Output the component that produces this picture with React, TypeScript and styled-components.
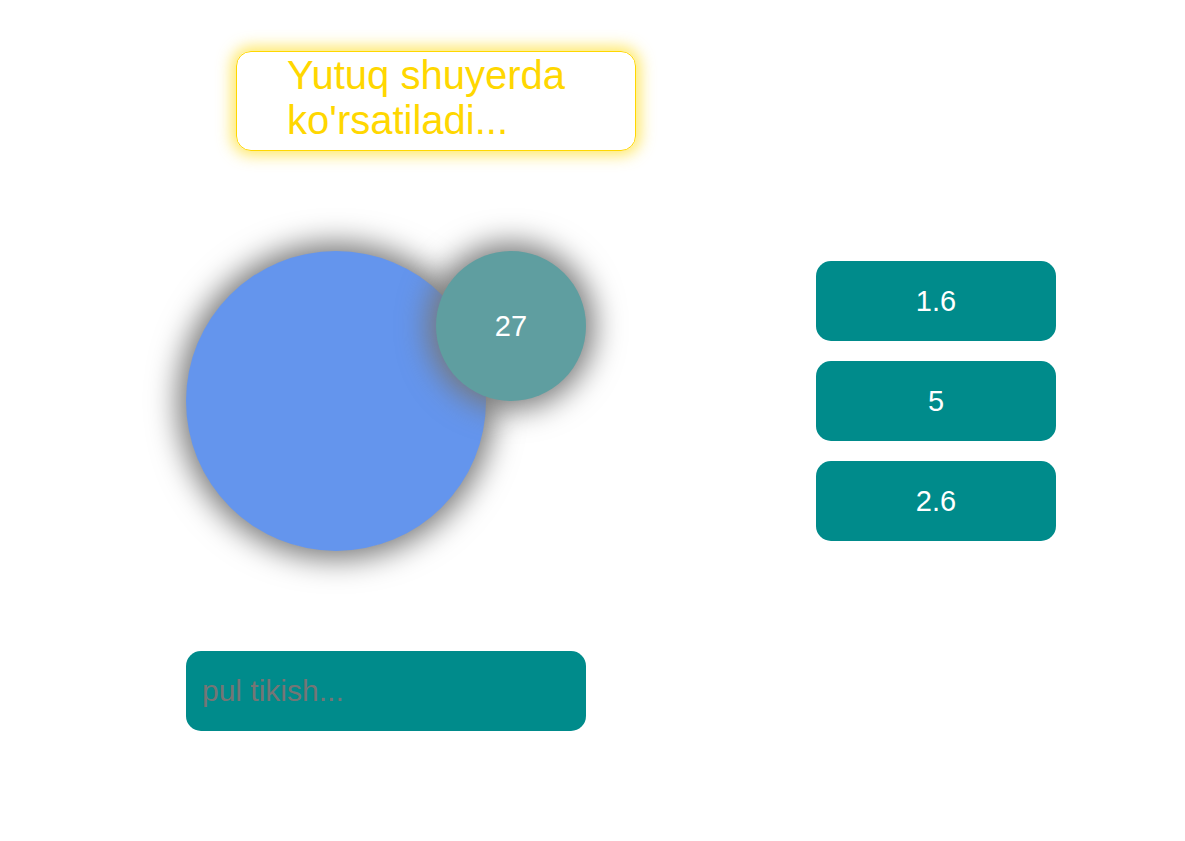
import React from "react";
import styled, { createGlobalStyle } from "styled-components";

const Global = createGlobalStyle`
  html, body { margin: 0; padding: 0; background: #ffffff; }
  body { font-family: "Liberation Sans", Arial, sans-serif; }
  * { box-sizing: border-box; }
`;

const Page = styled.div`
  width: 1185px;
  min-height: 841px;
  padding: 51px 0 0 186px;
  display: flex;
  flex-direction: column;
`;

const ResultBox = styled.div`
  width: 400px;
  height: 100px;
  margin-left: 50px;
  padding: 0 0 6px 50px;
  border: 1px solid #ffd700;
  border-radius: 15px;
  box-shadow: 0 0 15px 4px rgba(255, 221, 30, 0.7);
  color: #ffd700;
  font-size: 40px;
  line-height: 45px;
  display: flex;
  align-items: center;
`;

const GameRow = styled.div`
  display: flex;
  align-items: flex-start;
  margin-top: 100px;
  gap: 230px;
`;

const Wheel = styled.div`
  display: flex;
  align-items: flex-start;
  width: 400px;
`;

const BigCircle = styled.div`
  width: 300px;
  height: 300px;
  border-radius: 50%;
  background: #6495ed;
  box-shadow: 0 0 30px 8px #787878;
  flex-shrink: 0;
`;

const NumberBall = styled.div`
  width: 150px;
  height: 150px;
  margin-left: -50px;
  border-radius: 50%;
  background: #5f9ea0;
  box-shadow: 0 0 30px 8px #787878;
  color: #ffffff;
  font-size: 29px;
  display: flex;
  align-items: center;
  justify-content: center;
  flex-shrink: 0;
  position: relative;
`;

const Odds = styled.div`
  display: flex;
  flex-direction: column;
  gap: 20px;
  margin-top: 10px;
`;

const OddButton = styled.button`
  width: 240px;
  height: 80px;
  border: none;
  border-radius: 15px;
  background: #008b8b;
  color: #ffffff;
  font-family: "Liberation Sans", Arial, sans-serif;
  font-size: 29px;
  cursor: pointer;
`;

const BetInput = styled.input`
  width: 400px;
  height: 80px;
  margin-top: 100px;
  padding: 0 16px;
  border: none;
  outline: none;
  border-radius: 15px;
  background: #008b8b;
  color: #ffffff;
  font-family: "Liberation Sans", Arial, sans-serif;
  font-size: 30px;
  &::placeholder { color: #757575; }
`;

const odds = ["1.6", "5", "2.6"];

export default function App() {
  return (
    <>
      <Global />
      <Page>
        <ResultBox>Yutuq shuyerda ko'rsatiladi...</ResultBox>
        <GameRow>
          <Wheel>
            <BigCircle />
            <NumberBall>27</NumberBall>
          </Wheel>
          <Odds>
            {odds.map((o) => (
              <OddButton key={o}>{o}</OddButton>
            ))}
          </Odds>
        </GameRow>
        <BetInput placeholder="pul tikish..." />
      </Page>
    </>
  );
}
